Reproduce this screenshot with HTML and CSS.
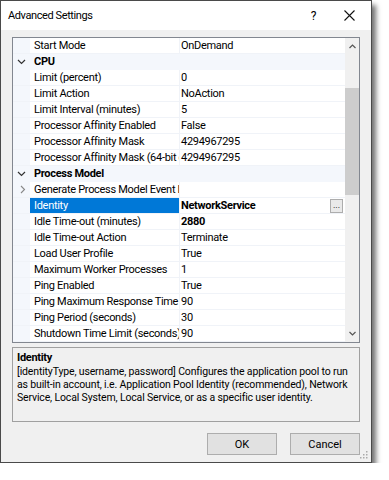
FILE: index.html
```html
<!DOCTYPE html>
<html lang="en">

<head>
    <meta charset="UTF-8">
    <meta name="viewport" content="width=device-width, initial-scale=1.0">
    <title>Advanced Settings</title>
    <link rel="stylesheet" href="styles.css">
</head>

<body>
    <div class="dialog">
        <div class="titlebar">
            <span class="title">Advanced Settings</span>
            <span class="help">?</span>
            <svg class="close" width="11" height="11" viewBox="0 0 11 11">
                <path d="M0.5 0.5 L10.5 10.5 M10.5 0.5 L0.5 10.5" stroke="#111" stroke-width="1.1" fill="none" />
            </svg>
        </div>

        <div class="content">
            <div class="grid">
                <div class="rows">
                    <div class="row"><div class="gutter"></div><div class="label">Start Mode</div><div class="value">OnDemand</div></div>
                    <div class="row category">
                        <div class="gutter"><svg width="9" height="6" viewBox="0 0 9 6"><path d="M1 1 L4.5 4.5 L8 1" stroke="#333" stroke-width="1.2" fill="none" /></svg></div>
                        <div class="label">CPU</div>
                    </div>
                    <div class="row"><div class="gutter"></div><div class="label">Limit (percent)</div><div class="value">0</div></div>
                    <div class="row"><div class="gutter"></div><div class="label">Limit Action</div><div class="value">NoAction</div></div>
                    <div class="row"><div class="gutter"></div><div class="label">Limit Interval (minutes)</div><div class="value">5</div></div>
                    <div class="row"><div class="gutter"></div><div class="label">Processor Affinity Enabled</div><div class="value">False</div></div>
                    <div class="row"><div class="gutter"></div><div class="label">Processor Affinity Mask</div><div class="value">4294967295</div></div>
                    <div class="row"><div class="gutter"></div><div class="label">Processor Affinity Mask (64-bit option)</div><div class="value">4294967295</div></div>
                    <div class="row category">
                        <div class="gutter"><svg width="9" height="6" viewBox="0 0 9 6"><path d="M1 1 L4.5 4.5 L8 1" stroke="#333" stroke-width="1.2" fill="none" /></svg></div>
                        <div class="label">Process Model</div>
                    </div>
                    <div class="row">
                        <div class="gutter"><svg class="expand" width="6" height="9" viewBox="0 0 6 9"><path d="M1 1 L4.5 4.5 L1 8" stroke="#888" stroke-width="1.1" fill="none" /></svg></div>
                        <div class="label">Generate Process Model Event Log Entry</div><div class="value"></div>
                    </div>
                    <div class="row selected">
                        <div class="gutter"></div><div class="label">Identity</div>
                        <div class="value changed">NetworkService<span class="dots">...</span></div>
                    </div>
                    <div class="row"><div class="gutter"></div><div class="label">Idle Time-out (minutes)</div><div class="value changed">2880</div></div>
                    <div class="row"><div class="gutter"></div><div class="label">Idle Time-out Action</div><div class="value">Terminate</div></div>
                    <div class="row"><div class="gutter"></div><div class="label">Load User Profile</div><div class="value">True</div></div>
                    <div class="row"><div class="gutter"></div><div class="label">Maximum Worker Processes</div><div class="value">1</div></div>
                    <div class="row"><div class="gutter"></div><div class="label">Ping Enabled</div><div class="value">True</div></div>
                    <div class="row"><div class="gutter"></div><div class="label">Ping Maximum Response Time (seconds)</div><div class="value">90</div></div>
                    <div class="row"><div class="gutter"></div><div class="label">Ping Period (seconds)</div><div class="value">30</div></div>
                    <div class="row"><div class="gutter"></div><div class="label">Shutdown Time Limit (seconds)</div><div class="value">90</div></div>
                </div>
                <div class="scrollbar">
                    <svg class="arrow" width="7" height="5" viewBox="0 0 7 5"><path d="M0.5 4 L3.5 1 L6.5 4" stroke="#555" stroke-width="1.2" fill="none" /></svg>
                    <div class="track"><div class="thumb"></div></div>
                    <svg class="arrow" width="7" height="5" viewBox="0 0 7 5"><path d="M0.5 1 L3.5 4 L6.5 1" stroke="#555" stroke-width="1.2" fill="none" /></svg>
                </div>
            </div>

            <div class="description">
                <div class="desc-title">Identity</div>
                <p>[identityType, username, password] Configures the application pool to run as built-in account, i.e. Application Pool Identity (recommended), Network Service, Local System, Local Service, or as a specific user identity.</p>
            </div>

            <div class="buttons">
                <button class="btn">OK</button>
                <button class="btn">Cancel</button>
            </div>
        </div>
        <svg class="grip" width="10" height="10" viewBox="0 0 10 10">
            <rect x="7" y="1" width="1.5" height="1.5" fill="#aaa" />
            <rect x="4" y="4" width="1.5" height="1.5" fill="#aaa" />
            <rect x="7" y="4" width="1.5" height="1.5" fill="#aaa" />
            <rect x="1" y="7" width="1.5" height="1.5" fill="#aaa" />
            <rect x="4" y="7" width="1.5" height="1.5" fill="#aaa" />
            <rect x="7" y="7" width="1.5" height="1.5" fill="#aaa" />
        </svg>
    </div>
</body>

</html>
```

FILE: styles.css
```css
body {
    margin: 0;
    padding: 0;
    background: #ffffff;
    font-family: Roboto, 'Noto Sans', sans-serif;
    font-size: 11px;
    letter-spacing: -0.3px;
    color: #000;
}

.dialog {
    position: relative;
    width: 370px;
    height: 461px;
    border: 1px solid #4a4a4a;
    background: #f0f0f0;
    box-shadow: 4px 5px 5px rgba(0, 0, 0, 0.55);
    display: flex;
    flex-direction: column;
}

.titlebar {
    height: 29px;
    background: #ffffff;
    display: flex;
    align-items: center;
    padding: 0 16px 0 7px;
}

.title {
    flex: 1;
    font-size: 11px;
    letter-spacing: -0.4px;
}

.help {
    font-size: 12px;
    margin-right: 28px;
}

.content {
    flex: 1;
    display: flex;
    flex-direction: column;
    padding: 7px 11px 0 11px;
}

.grid {
    height: 304px;
    border: 1px solid #828790;
    background: #ffffff;
    display: flex;
}

.rows {
    flex: 1;
    overflow: hidden;
}

.row {
    height: 16px;
    display: flex;
    box-sizing: border-box;
    border-bottom: 1px solid #f0f3f8;
    line-height: 15px;
}

.gutter {
    width: 17px;
    flex: none;
    background: #f4f7fc;
    display: flex;
    align-items: center;
    justify-content: center;
}

.expand {
    margin-left: 2px;
}

.label {
    width: 145px;
    flex: none;
    padding-left: 4px;
    white-space: nowrap;
    overflow: hidden;
}

.value {
    flex: 1;
    border-left: 1px solid #f0f3f8;
    padding-left: 1px;
    white-space: nowrap;
    overflow: hidden;
    display: flex;
}

.category {
    background: #f4f7fc;
    border-bottom-color: #f4f7fc;
}

.category .label {
    font-weight: bold;
}

.selected .label {
    background: #0078d7;
    color: #ffffff;
}

.changed {
    font-weight: bold;
}

.dots {
    margin-left: auto;
    margin-right: 2px;
    width: 11px;
    height: 12px;
    margin-top: 1px;
    border: 1px solid #adadad;
    background: #e9e9e9;
    font-weight: normal;
    font-size: 9px;
    letter-spacing: 0;
    line-height: 10px;
    text-align: center;
}

.scrollbar {
    width: 14px;
    flex: none;
    background: #f0f0f0;
    display: flex;
    flex-direction: column;
    align-items: center;
}

.arrow {
    margin: 6px 0;
}

.track {
    flex: 1;
    width: 100%;
}

.thumb {
    margin-top: 33px;
    height: 107px;
    background: #cdcdcd;
}

.description {
    margin-top: 4px;
    height: 69px;
    border: 1px solid #a0a0a0;
    padding: 2px 4px;
}

.desc-title {
    font-weight: bold;
    line-height: 15px;
}

.description p {
    margin: 0;
    font-size: 10.5px;
    letter-spacing: -0.15px;
    line-height: 13px;
}

.buttons {
    display: flex;
    justify-content: flex-end;
    gap: 13px;
    margin-top: 11px;
}

.btn {
    width: 70px;
    height: 22px;
    border: 1px solid #adadad;
    background: #e1e1e1;
    font-family: Roboto, 'Noto Sans', sans-serif;
    font-size: 11px;
    color: #000;
    padding: 0;
}

.grip {
    position: absolute;
    right: 2px;
    bottom: 2px;
}
```
